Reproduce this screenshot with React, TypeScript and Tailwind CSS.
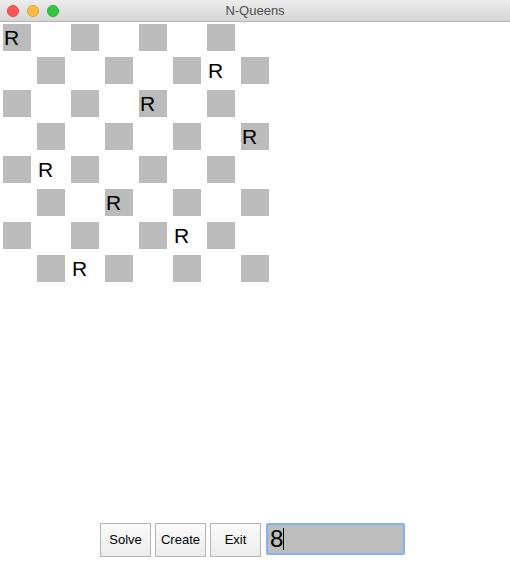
import React from 'react';

const N = 8;
// queen column for each row
const queens = [0, 6, 4, 7, 1, 3, 5, 2];

const App: React.FC = () => {
  return (
    <div className="w-[510px] h-[561px] bg-white flex flex-col overflow-hidden" style={{ fontFamily: '"Liberation Sans", Arial, sans-serif' }}>
      {/* Title bar */}
      <div className="relative h-[22px] shrink-0 bg-gradient-to-b from-[#ececec] to-[#d6d6d6] border-b border-[#b3b3b3] flex items-center justify-center">
        <div className="absolute left-[7px] top-[5px] flex gap-[8px]">
          <span className="w-[12px] h-[12px] rounded-full bg-[#fc5753] border border-[#df4744]" />
          <span className="w-[12px] h-[12px] rounded-full bg-[#fdbc40] border border-[#de9f34]" />
          <span className="w-[12px] h-[12px] rounded-full bg-[#33c748] border border-[#27aa35]" />
        </div>
        <span className="text-[13px] text-[#4d4d4d]">N-Queens</span>
      </div>

      {/* Board */}
      <div className="pt-[2px] pl-[3px] grid grid-cols-[repeat(8,28px)] auto-rows-[27px] gap-x-[6px] gap-y-[6px]">
        {Array.from({ length: N * N }).map((_, i) => {
          const r = Math.floor(i / N);
          const c = i % N;
          const dark = (r + c) % 2 === 0;
          return (
            <div
              key={i}
              className={`${dark ? 'bg-[#bbbbbb]' : 'bg-white'} text-[21px] leading-[27px] pl-[1px] text-black`}
            >
              {queens[r] === c ? 'R' : ''}
            </div>
          );
        })}
      </div>

      <div className="flex-1" />

      {/* Controls */}
      <div className="flex items-start gap-[4px] pb-[4px] pl-[100px]">
        {['Solve', 'Create', 'Exit'].map((label) => (
          <button
            key={label}
            className="w-[51px] h-[34px] border border-[#b4b4b4] bg-gradient-to-b from-[#fafafa] to-[#ececec] text-[13px] text-black"
          >
            {label}
          </button>
        ))}
        <div className="ml-[1px] w-[139px] h-[32px] bg-[#bdbdbd] border-2 border-[#86b1ea] rounded-[2px] flex items-center pl-[2px]">
          <span className="text-[24px] leading-none text-black">8</span>
          <span className="w-[1px] h-[22px] bg-black" />
        </div>
      </div>
    </div>
  );
};

export default App;
